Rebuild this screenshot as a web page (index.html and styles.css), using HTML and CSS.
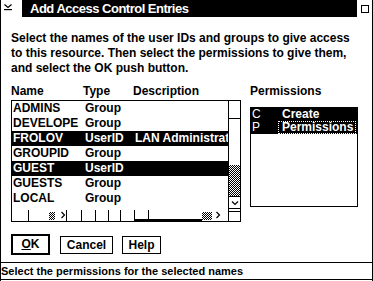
FILE: index.html
```html
<!doctype html>
<html lang="en">
<head>
	<meta charset="UTF-8">
	<title>Add Access Control Entries</title>
	<link rel="stylesheet" href="styles.css">
</head>
<body>
	<div class="window">
		<div class="titlebar">
			<div class="sysmenu">
				<svg width="10" height="8" viewBox="0 0 10 8"><polyline points="1.5,1.5 5,4.5 8.5,1.5" fill="none" stroke="#000" stroke-width="1.2"/><rect x="1" y="6" width="8" height="1.2" fill="#000"/></svg>
			</div>
			<div class="title">Add Access Control Entries</div>
			<div class="maxbox"><span class="sq"></span></div>
		</div>
		<div class="client">
			<p class="intro">Select the names of the user IDs and groups to give access<br>to this resource. Then select the permissions to give them,<br>and select the OK push button.</p>
			<div class="lists">
				<div class="names">
					<div class="colhead"><span class="c-name">Name</span><span class="c-type">Type</span><span>Description</span></div>
					<div class="listbox">
						<div class="listarea">
							<div class="row"><span class="c-name">ADMINS</span><span class="c-type">Group</span></div>
							<div class="row"><span class="c-name">DEVELOPE</span><span class="c-type">Group</span></div>
							<div class="row sel"><span class="c-name">FROLOV</span><span class="c-type">UserID</span><span class="c-desc">LAN Administrat</span></div>
							<div class="row"><span class="c-name">GROUPID</span><span class="c-type">Group</span></div>
							<div class="row sel"><span class="c-name">GUEST</span><span class="c-type">UserID</span></div>
							<div class="row"><span class="c-name">GUESTS</span><span class="c-type">Group</span></div>
							<div class="row"><span class="c-name">LOCAL</span><span class="c-type">Group</span></div>
							<div class="hscroll">
								<span class="seg" style="width:16px"></span>
								<span class="seg tick" style="width:21px"></span>
								<span class="shade" style="width:6px"></span>
								<span class="seg" style="width:5px"></span>
								<span class="arr"><svg width="6" height="8" viewBox="0 0 6 8"><polyline points="1.5,1 4.5,4 1.5,7" fill="none" stroke="#000" stroke-width="1.2"/></svg></span>
								<span class="seg tick" style="width:15px"></span>
								<span class="seg tick" style="width:14px"></span>
								<span class="seg tick" style="width:13px"></span>
								<span class="seg tick" style="width:12px"></span>
								<span class="seg tick" style="width:14px"></span>
								<span class="seg tick thick" style="width:14px"></span>
								<span class="seg tick thick" style="width:54px"></span>
								<span class="shade" style="width:10px"></span>
								<span class="seg" style="width:3px"></span>
								<span class="arr"><svg width="6" height="8" viewBox="0 0 6 8"><polyline points="1.5,1 4.5,4 1.5,7" fill="none" stroke="#000" stroke-width="1.2"/></svg></span>
							</div>
						</div>
						<div class="vscroll">
							<div class="vs-top"></div>
							<div class="vs-track"></div>
							<div class="vs-shade"></div>
							<div class="vs-down"><svg width="8" height="6" viewBox="0 0 8 6"><polyline points="1,1.5 4,4.5 7,1.5" fill="none" stroke="#000" stroke-width="1.2"/></svg></div>
							<div class="vs-gap"></div>
							<div class="vs-corner"></div>
						</div>
					</div>
				</div>
				<div class="perms">
					<div class="colhead">Permissions</div>
					<div class="permbox">
						<div class="prow"><span class="p-code">C</span><span>Create</span></div>
						<div class="prow"><span class="p-code">P</span><span class="focus">Permissions</span></div>
					</div>
				</div>
			</div>
			<div class="buttons">
				<div class="btn default"><u>O</u>K</div>
				<div class="btn cancel">Cancel</div>
				<div class="btn help">Help</div>
			</div>
		</div>
		<div class="status">Select the permissions for the selected names</div>
	</div>
</body>
</html>
```

FILE: styles.css
```css
*,*::before,*::after{box-sizing:border-box;}
html,body{
	margin:0;padding:0;
	background:#fff;
}
body{
	width:373px;
	height:281px;
	overflow:hidden;
	font-family:"Liberation Sans",Arial,sans-serif;
	font-weight:bold;
	font-size:12px;
	color:#000;
}
.window{
	width:373px;
	height:281px;
	border-left:1px solid #000;
	border-right:1px solid #000;
	display:flex;
	flex-direction:column;
}
/* title bar */
.titlebar{
	height:17px;
	display:flex;
	flex:none;
}
.sysmenu{
	width:21px;
	padding:3px 0 0 2px;
}
.sysmenu svg{display:block;}
.title{
	flex:1;
	background:#000;
	color:#fff;
	font-size:13px;
	letter-spacing:-0.5px;
	line-height:17px;
	padding-left:8px;
	white-space:nowrap;
}
.maxbox{
	width:15px;
	padding:5px 0 0 4px;
}
.maxbox .sq{
	display:block;
	width:8px;
	height:8px;
	border:1px solid #000;
}
/* client */
.client{
	flex:1;
	padding:14px 0 0 10px;
}
.intro{
	margin:0;
	line-height:15px;
	white-space:nowrap;
}
.lists{
	display:flex;
	margin-top:8px;
}
.colhead{
	height:15px;
	line-height:15px;
	display:flex;
	white-space:nowrap;
}
.c-name{width:72px;flex:none;}
.c-type{width:50px;flex:none;}
.c-desc{flex:none;}
.names{width:230px;}
.listbox{
	margin-top:1px;
	height:122px;
	border:1px solid #000;
	display:flex;
}
.listarea{
	width:216px;
	overflow:hidden;
}
.row{
	height:15px;
	line-height:15px;
	padding-left:1px;
	display:flex;
	white-space:nowrap;
	overflow:hidden;
}
.row.sel{
	background:#000;
	color:#fff;
}
.hscroll{
	height:15px;
	display:flex;
	align-items:flex-end;
}
.hscroll .seg{
	height:11px;
	flex:none;
}
.hscroll .tick{border-left:1px solid #000;}
.hscroll .thick{border-bottom:2px solid #000;}
.shade,.vs-shade{
	background:repeating-conic-gradient(#000 0 25%,#fff 0 50%) 0 0/2px 2px;
}
.hscroll .shade{
	height:8px;
	flex:none;
	margin-bottom:1px;
}
.hscroll .arr{
	width:6px;
	height:10px;
	flex:none;
}
.hscroll .arr svg{display:block;}
.vscroll{
	width:12px;
	border-left:1px solid #000;
	display:flex;
	flex-direction:column;
}
.vs-top{height:18px;border-bottom:1px solid #000;}
.vs-track{height:46px;}
.vs-shade{height:31px;}
.vs-down{
	height:13px;
	border-top:1px solid #000;
	border-bottom:1px solid #000;
	display:flex;
	align-items:center;
	justify-content:center;
}
.vs-gap{height:2px;}
.vs-corner{height:10px;border-top:1px solid #000;}
/* permissions */
.perms{
	margin-left:9px;
	width:108px;
}
.permbox{
	margin-top:8px;
	height:100px;
	border:1px solid #000;
}
.prow{
	height:13px;
	line-height:13px;
	background:#000;
	color:#fff;
	display:flex;
	white-space:nowrap;
	overflow:hidden;
}
.p-code{
	width:31px;
	padding-left:1px;
	font-size:12px;
	font-weight:normal;
}
.focus{
	margin-left:-4px;
	padding:0 2px 0 3px;
	line-height:11px;
	border:1px dotted #fff;
}
/* buttons */
.buttons{
	display:flex;
	align-items:center;
	margin-top:12px;
}
.btn{
	height:18px;
	line-height:16px;
	border:1px solid #000;
	text-align:center;
}
.btn.default{
	width:39px;
	height:21px;
	line-height:17px;
	border-width:2px;
}
.btn.cancel{width:53px;margin-left:10px;}
.btn.help{width:39px;margin-left:9px;}
/* status line */
.status{
	flex:none;
	height:18px;
	font-size:11px;
	line-height:16px;
	border-top:1px solid #000;
	border-bottom:1px solid #000;
	margin-bottom:1px;
	white-space:nowrap;
}
```
